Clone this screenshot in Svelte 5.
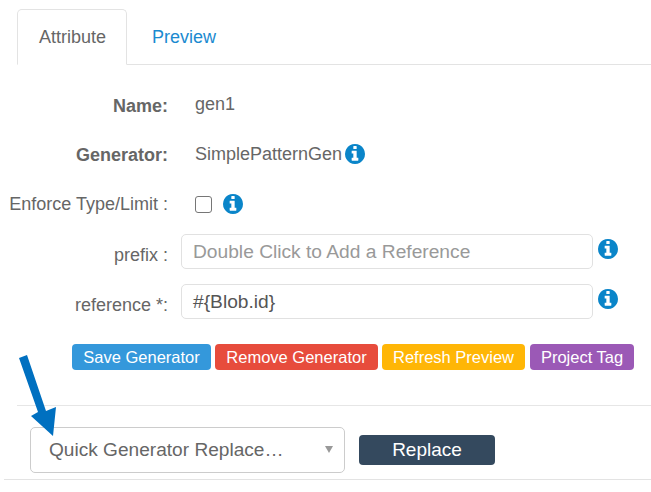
<script lang="ts">
	const buttons = [
		{ label: 'Save Generator', cls: 'blue' },
		{ label: 'Remove Generator', cls: 'red' },
		{ label: 'Refresh Preview', cls: 'amber' },
		{ label: 'Project Tag', cls: 'purple' }
	];
	const infoPath =
		'M1152 1376v-160q0-14-9-23t-23-9h-96v-512q0-14-9-23t-23-9h-320q-14 0-23 9t-9 23v160q0 14 9 23t23 9h96v320h-96q-14 0-23 9t-9 23v160q0 14 9 23t23 9h448q14 0 23-9t9-23zm-128-896v-160q0-14-9-23t-23-9h-192q-14 0-23 9t-9 23v160q0 14 9 23t23 9h192q14 0 23-9t9-23zm640 416q0 209-103 385.5t-279.5 279.5-385.5 103-385.5-103-279.5-279.5-103-385.5 103-385.5 279.5-279.5 385.5-103 385.5 103 279.5 279.5 103 385.5z';
</script>

{#snippet info()}
	<svg class="info" viewBox="128 128 1536 1536" aria-hidden="true"><path d={infoPath} /></svg>
{/snippet}

<div class="page">
	<nav class="tabs">
		<span class="tab active">Attribute</span>
		<span class="tab">Preview</span>
	</nav>

	<div class="row text-row first">
		<span class="label bold">Name:</span>
		<span class="value">gen1</span>
	</div>
	<div class="row text-row generator">
		<span class="label bold">Generator:</span>
		<span class="value">SimplePatternGen</span>
		{@render info()}
	</div>
	<div class="row text-row enforce">
		<span class="label">Enforce Type/Limit :</span>
		<span class="check"></span>
		{@render info()}
	</div>

	<div class="row input-row prefix">
		<span class="label">prefix :</span>
		<span class="input placeholder">Double Click to Add a Reference</span>
		{@render info()}
	</div>
	<div class="row input-row">
		<span class="label">reference *:</span>
		<span class="input">#&#123;Blob.id&#125;</span>
		{@render info()}
	</div>

	<div class="actions">
		{#each buttons as b}
			<span class="btn {b.cls}">{b.label}</span>
		{/each}
	</div>

	<div class="replace">
		<div class="select">
			<span>Quick Generator Replace…</span>
			<i class="caret"></i>
		</div>
		<span class="replace-btn">Replace</span>
	</div>
	<div class="bottom-line"></div>

	<svg class="arrow" width="70" height="90" viewBox="0 0 70 90" aria-hidden="true">
		<polygon points="19,8 27,5 46,61 56,57 53,86 31,66 38,62" fill="#0070c0" />
	</svg>
</div>

<style>
	:global(body) {
		background: #fff;
	}
	.page {
		position: relative;
		width: 651px;
		height: 492px;
		overflow: hidden;
		font-family: 'Liberation Sans', Arial, sans-serif;
		font-size: 18px;
		color: #666;
		box-sizing: border-box;
		padding-top: 9px;
	}
	.tabs {
		display: flex;
		height: 56px;
		margin-left: 17px;
		border-bottom: 1px solid #e3e3e3;
		box-sizing: border-box;
	}
	.tab {
		box-sizing: border-box;
		height: 56px;
		padding: 17px 22px 0 24px;
		line-height: 20px;
		color: #1b8ad0;
		border: 1px solid transparent;
	}
	.tab.active {
		width: 110px;
		color: #666;
		background: #fff;
		border-color: #e3e3e3;
		border-bottom-color: #fff;
		border-radius: 5px 5px 0 0;
		padding-left: 21px;
	}
	.tab + .tab {
		padding-left: 24px;
	}
	.row {
		display: flex;
		align-items: center;
	}
	.label {
		flex: none;
		box-sizing: border-box;
		width: 168px;
		text-align: right;
	}
	.bold {
		font-weight: 700;
	}
	.text-row {
		height: 24px;
		margin-top: 26px;
	}
	.text-row.first {
		margin-top: 28px;
	}
	.first .label {
		padding-top: 2px;
	}
	.text-row.enforce {
		margin-top: 25px;
	}
	.value {
		margin-left: 27px;
		position: relative;
		top: -1px;
	}
	.info {
		flex: none;
		width: 20px;
		height: 20px;
		fill: #0a85c9;
		margin-left: 3px;
	}
	.generator .info {
		margin-bottom: 3px;
	}
	.check {
		box-sizing: border-box;
		width: 17px;
		height: 17px;
		margin-left: 27px;
		border: 1.5px solid #767676;
		border-radius: 3px;
		margin-right: 11px;
	}
	.enforce .info {
		margin-left: 0;
		margin-bottom: 1px;
	}
	.input-row {
		height: 35px;
		margin-top: 15px;
	}
	.input-row .label {
		padding-top: 7px;
	}
	.input-row .info {
		margin-left: 1px;
		margin-bottom: 6px;
	}
	.prefix {
		margin-top: 18px;
	}
	.input {
		box-sizing: border-box;
		width: 412px;
		height: 35px;
		margin-left: 13px;
		margin-right: 4px;
		padding: 0 11px;
		line-height: 33px;
		border: 1px solid #e1e1e1;
		border-radius: 5px;
		color: #555;
		font-size: 19.2px;
	}
	.placeholder {
		color: #999;
	}
	.actions {
		display: flex;
		margin: 25px 0 0 72px;
	}
	.btn {
		box-sizing: border-box;
		flex: none;
		height: 26px;
		line-height: 26px;
		text-align: center;
		border-radius: 4px;
		font-size: 16.5px;
		color: #fff;
	}
	.blue {
		width: 139px;
		background: #3498db;
	}
	.red {
		width: 163px;
		margin-left: 4px;
		background: #e74c3c;
	}
	.amber {
		width: 143px;
		margin-left: 4px;
		background: #ffb606;
	}
	.purple {
		width: 104px;
		margin-left: 5px;
		background: #9b59b6;
	}
	.replace {
		display: flex;
		align-items: center;
		height: 74px;
		margin: 35px 0 0 17px;
		padding: 14px 0 0 13px;
		border-top: 1px solid #e6e6e6;
		box-sizing: border-box;
		gap: 14px;
	}
	.select {
		box-sizing: border-box;
		display: flex;
		align-items: center;
		justify-content: space-between;
		width: 315px;
		height: 46px;
		padding: 0 11px 0 18px;
		border: 1px solid #ccc;
		border-radius: 5px;
		color: #666;
		font-size: 19.1px;
	}
	.caret {
		border: 4px solid transparent;
		border-top: 7px solid #999;
		border-bottom: 0;
	}
	.replace-btn {
		box-sizing: border-box;
		width: 136px;
		height: 30px;
		line-height: 30px;
		text-align: center;
		border-radius: 4px;
		background: #34495e;
		color: #fff;
		font-size: 19px;
	}
	.bottom-line {
		margin-left: 4px;
		border-top: 1px solid #e3e3e3;
	}
	.arrow {
		position: absolute;
		left: 0;
		top: 350px;
	}
</style>
